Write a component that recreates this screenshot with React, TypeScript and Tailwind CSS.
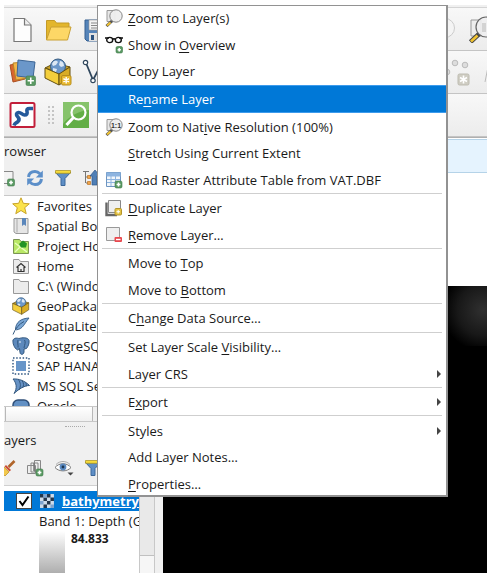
import React from "react";

type Glyph = () => React.ReactElement;

const PlusBadge = ({ x, y, s = 8 }: { x: number; y: number; s?: number }) => (
  <g>
    <rect x={x} y={y} width={s} height={s} rx="1.5" fill="#5a9a63" stroke="#3f7a49" strokeWidth=".6" />
    <path d={`M${x + s / 2} ${y + 1.6}v${s - 3.2}M${x + 1.6} ${y + s / 2}h${s - 3.2}`} stroke="#fff" strokeWidth="1.6" />
  </g>
);

const PageIcon: Glyph = () => (
  <svg width="28" height="28" viewBox="0 0 28 28">
    <path d="M6 3.500h10.500l6.500 6.500v16.500H6z" fill="#fdfdfd" stroke="#777" strokeWidth="1.200" />
    <path d="M16.500 3.500v6.500H23" fill="#eee" stroke="#777" strokeWidth="1.200" />
  </svg>
);
const OpenIcon: Glyph = () => (
  <svg width="28" height="28" viewBox="0 0 28 28">
    <path d="M2.500 25V5.500h8l2 2.500H25v6" fill="#e3b62d" stroke="#c49a27" />
    <path d="M2.500 25 7 12h20l-3.500 13z" fill="#fdd766" stroke="#c9a033" />
  </svg>
);
const SaveIcon: Glyph = () => (
  <svg width="28" height="28" viewBox="0 0 28 28">
    <path d="M5 5h21v21H7l-2-2z" fill="#5584b9" stroke="#345f91" />
    <path d="M9 5h14v10H9z" fill="#f3f3f3" stroke="#999" strokeWidth=".6" />
    <path d="M11 8h11M11 10.500h11M11 13h11" stroke="#888" />
    <path d="M9 18h13v8H9z" fill="#e2e2e2" />
    <path d="M11 20h3v5h-3z" fill="#2c5380" />
  </svg>
);
const LayersIcon: Glyph = () => (
  <svg width="28" height="28" viewBox="0 0 28 28">
    <path d="m2 7 12-2 3 16-12 3z" fill="#d9662f" stroke="#a94e20" />
    <path d="m5 5 13-1 2 16-12 2z" fill="#f0b64a" stroke="#b98427" />
    <path d="m10 2 17 2-2 16-16-2z" fill="#6b97c9" stroke="#3c6594" />
    <PlusBadge x={18} y={18} s={9.5} />
  </svg>
);
const CubeArt = () => (
  <g>
    <path d="m1 10 10-5 15 4-10 6z" fill="#c9a227" stroke="#645012" />
    <circle cx="14" cy="8.500" r="7.500" fill="#6b97c9" stroke="#34597f" />
    <path d="M9 4c2-2 4-1 5 0l-2 3-3 1-1-2zM16 3c3 0 4 3 4 5l-3 1-2-2zM9 10l4 1-1 3-3-1z" fill="#dce8f4" />
    <path d="m1 10 14 6v11L1 20z" fill="#f4cf3c" stroke="#645012" />
    <path d="m15 16 11-7v11l-11 7z" fill="#d9ac25" stroke="#645012" />
  </g>
);
const NewGeoPackageIcon: Glyph = () => (
  <svg width="28" height="28" viewBox="0 0 28 28">
    <CubeArt />
    <rect x="17.500" y="17.500" width="9.500" height="9.500" rx="1.500" fill="#e8b931" stroke="#b88d1b" />
    <path d="M22.200 19v6.500M19.400 20.600l5.600 3.300M25 20.600l-5.600 3.300" stroke="#fff" strokeWidth="1.400" />
  </svg>
);
const VertexIcon: Glyph = () => (
  <svg width="28" height="28" viewBox="0 0 28 28" fill="none">
    <path d="m6 5 7 17 9-17" stroke="#2f465c" strokeWidth="1.800" />
    <g fill="#fff" stroke="#2f465c" strokeWidth="1.200">
      <circle cx="5.500" cy="4.500" r="2.200" />
      <circle cx="13" cy="22.500" r="2.200" />
      <circle cx="22" cy="4.500" r="2.200" />
    </g>
  </svg>
);
const RiverIcon: Glyph = () => (
  <svg width="28" height="28" viewBox="0 0 28 28">
    <rect x="2.500" y="2" width="24" height="24" rx="1.500" fill="#fff" stroke="#c21f3a" strokeWidth="2" />
    <path
      d="M25 7.500h-3.500c-2.500 0-3 1-2.500 3s0 3.500-2.500 3.500S13 11 10.500 11.500s-2.500 2.500-1 4 2.500 3 .5 5-3 1-4 4"
      fill="none"
      stroke="#255a9b"
      strokeWidth="3.600"
    />
  </svg>
);
const GreenSearchIcon: Glyph = () => (
  <svg width="28" height="28" viewBox="0 0 28 28">
    <rect x="1" y="1" width="26" height="26" fill="#62ae46" />
    <path d="M1 1h26v8C18 10 8 14 1 23z" fill="#86c36b" />
    <circle cx="16.500" cy="11.500" r="7" fill="none" stroke="#fff" strokeWidth="2.200" />
    <path d="M11.500 16.500 4.500 24" stroke="#fff" strokeWidth="3" />
  </svg>
);
const FaintLensIcon: Glyph = () => (
  <svg width="28" height="28" viewBox="0 0 28 28" fill="none">
    <circle cx="14" cy="13" r="9.500" fill="#f4f4f4" stroke="#ccc" />
  </svg>
);
const ZoomLayerBigIcon: Glyph = () => (
  <svg width="28" height="28" viewBox="0 0 28 28">
    <path d="M4 5h10v16H4z" fill="#ededed" stroke="#999" />
    <path d="m12 19-8.500 8" stroke="#444" strokeWidth="4.600" />
    <path d="m10.500 20.500-6.500 6" stroke="#f2c431" strokeWidth="2.600" />
    <circle cx="19" cy="12" r="10" fill="#eeeef0" fillOpacity=".9" stroke="#666" strokeWidth="1.200" />
    <path d="M15 8h4v9h-4z" fill="#d3d3d3" />
  </svg>
);
const FaintPointsIcon: Glyph = () => (
  <svg width="28" height="28" viewBox="0 0 28 28">
    <g fill="#ddd" stroke="#bbb">
      <circle cx="12" cy="5" r="2.800" />
      <circle cx="22" cy="7" r="2.800" />
      <circle cx="4" cy="14" r="2.800" />
    </g>
    <rect x="15" y="16" width="11" height="11" rx="1.500" fill="#cfcdc3" stroke="#bdbbb0" />
    <path d="M20.500 17.500v8M17 19.500l7 4M24 19.500l-7 4" stroke="#fff" strokeWidth="1.600" />
  </svg>
);
const FaintLineIcon: Glyph = () => (
  <svg width="28" height="28" viewBox="0 0 28 28" fill="none" stroke="#bbb">
    <path d="m2 24 4-20M6 4l6 18" />
  </svg>
);

const AddLayerSmall: Glyph = () => (
  <svg width="18" height="18" viewBox="0 0 18 18">
    <path d="M1 2.500h14v12H1z" fill="#f3f3f3" stroke="#888" />
    <PlusBadge x={9.500} y={10} s={7} />
  </svg>
);
const RefreshIcon: Glyph = () => (
  <svg width="18" height="18" viewBox="0 0 18 18" fill="none">
    <path d="M2.500 8C3 4 6 2.500 9 2.500c2 0 3.500.800 5 2.300" stroke="#5c8fc9" strokeWidth="3" />
    <path d="M16.800 1.500v7h-7z" fill="#5c8fc9" />
    <path d="M15.500 10c-.500 4-3.500 5.500-6.500 5.500-2 0-3.500-.800-5-2.300" stroke="#5c8fc9" strokeWidth="3" />
    <path d="M1.200 16.500v-7h7z" fill="#5c8fc9" />
  </svg>
);
const FilterIcon: Glyph = () => (
  <svg width="18" height="18" viewBox="0 0 18 18">
    <path d="M1.500 3.500h15L11 9.500v7H7v-7z" fill="#5f8fc6" stroke="#3c689b" />
    <path d="M1.500 1.500h15v2.800h-15z" fill="#f6dc3c" stroke="#a68d1a" strokeWidth=".7" />
  </svg>
);
const CollapseIcon: Glyph = () => (
  <svg width="18" height="18" viewBox="0 0 18 18">
    <path d="M1 2.500h6M3.500 3v11M4 8h4M4 14h4" stroke="#777" fill="none" />
    <path d="M5.500 6.500h3v3h-3zM5.500 12.500h3v3h-3z" fill="#f0a54a" stroke="#bb7425" strokeWidth=".7" />
    <path d="m13 1 5 6h-3v9h-5V7H8z" fill="#4f7fb6" stroke="#2f5688" strokeWidth=".7" />
  </svg>
);
const BroomIcon: Glyph = () => (
  <svg width="18" height="18" viewBox="0 0 18 18">
    <path d="m16.500 2-6 6" stroke="#b0652b" strokeWidth="2.600" />
    <path d="m8 6 5 5-1.500 1.500-5-5z" fill="#cc4d34" />
    <path d="m6 8 5 5-4 4L1 11z" fill="#f2c84c" stroke="#bb8e20" strokeWidth=".7" />
  </svg>
);
const GroupAddIcon: Glyph = () => (
  <svg width="18" height="18" viewBox="0 0 18 18">
    <path d="M1.500 6.500h8v8h-8zM5 4h7v9H5zM8.500 1.500h6v11h-6z" fill="#eee" stroke="#888" />
    <path d="M8 4v8" stroke="#777" strokeWidth="1.500" />
    <PlusBadge x={10} y={10} s={7} />
  </svg>
);
const EyeIcon: Glyph = () => (
  <svg width="20" height="18" viewBox="0 0 20 18">
    <path d="M1 8.500C5 3.500 13 3.500 17 8.500c-4 4.500-12 4.500-16 0z" fill="#fff" stroke="#777" />
    <path d="M2 5.500c4-4 10-4 14 0" fill="none" stroke="#aaa" />
    <circle cx="9" cy="8" r="3.400" fill="#5b8ac0" />
    <circle cx="9" cy="8" r="1.400" fill="#1d3550" />
    <path d="M13.500 13.500h6l-3 3z" fill="#444" />
  </svg>
);

const StarIcon: Glyph = () => (
  <svg width="18" height="18" viewBox="0 0 18 18">
    <path d="m9 .8 2.300 5.500 6 .5-4.600 3.900 1.500 6L9 13.500l-5.200 3.200 1.500-6L.7 6.800l6-.5z" fill="#fbe34b" stroke="#c9a42a" />
  </svg>
);
const BookmarkIcon: Glyph = () => (
  <svg width="18" height="18" viewBox="0 0 18 18">
    <path d="M2 1.500h14v15H4l-2-1.500z" fill="#e6e6e6" stroke="#9a9a9a" />
    <path d="M5 1.500v14" stroke="#aaa" />
    <path d="M10 1h4v8l-2-1.500L10 9z" fill="#5a86bb" />
  </svg>
);
const ProjectHomeIcon: Glyph = () => (
  <svg width="18" height="18" viewBox="0 0 18 18">
    <path d="M1.500 2.500h6l1.500 2h7.500v12h-15z" fill="#b9e866" stroke="#7b9453" />
    <path d="m3 6 12 9M3 15l5-5" stroke="#e9ffc0" strokeWidth="1.300" />
    <path d="m7 7 4-3.500 4 3-1 4h-5z" fill="#229322" />
  </svg>
);
const FolderShape = () => <path d="M1.500 2.500h5.500l1.500 2h8v12h-15z" fill="#ececec" stroke="#999" />;
const HomeIcon: Glyph = () => (
  <svg width="18" height="18" viewBox="0 0 18 18">
    <FolderShape />
    <path d="m4.500 10.500 4.500-4 4.500 4M6 10v4.500h6V10M9 14.500V12" fill="none" stroke="#333" strokeWidth="1.200" />
  </svg>
);
const FolderIcon: Glyph = () => (
  <svg width="18" height="18" viewBox="0 0 18 18">
    <FolderShape />
  </svg>
);
const GeoPackageIcon: Glyph = () => (
  <svg width="18" height="18" viewBox="0 0 28 28">
    <CubeArt />
  </svg>
);
const FeatherIcon: Glyph = () => (
  <svg width="18" height="18" viewBox="0 0 18 18">
    <path d="M17 1C9 1.500 4 5 3.500 12l1 .8C11 12 12 7 17 1z" fill="#79a5d3" stroke="#3f6690" />
    <path d="M1 17.500C3 12 7 7 12 4.500" fill="none" stroke="#34597f" />
  </svg>
);
const ElephantIcon: Glyph = () => (
  <svg width="18" height="18" viewBox="0 0 18 18">
    <path d="M1 3c1.500-2.500 4-2 6-1.500 3-1 9-1.500 10 2 .5 3-1 6-2.500 8l-2.500.5v3c0 3-4 3-4 .5l-.5-4-2 1.500C2 11 .5 6 1 3z" fill="#5d89bc" stroke="#33587f" />
    <path d="M6 3c-1 3 .5 5 0 7.500M12.500 3c1.500 2.500 0 4.500-.5 8" fill="none" stroke="#33587f" />
    <circle cx="8" cy="5" r=".8" fill="#fff" />
  </svg>
);
const HanaIcon: Glyph = () => (
  <svg width="18" height="18" viewBox="0 0 18 18">
    <path d="M4 4h10v10H4z" fill="#6795c9" />
    <path d="M1 1h16v16H1z" fill="none" stroke="#2f5580" strokeWidth="1.400" strokeDasharray="1.500 1.700" />
  </svg>
);
const MssqlIcon: Glyph = () => (
  <svg width="18" height="18" viewBox="0 0 18 18">
    <path d="M1 2c6-.5 12 2 16.500 6.500-5 0-10 3-15.500 8C5.500 11 4.500 6 1 2z" fill="#6692c5" stroke="#33587f" />
    <path d="M6 2c3 4 3 7 1 11M10 3.500c2 3 2 5 .5 7.500M13.500 5.500c1 1.500 1 2.500.5 4" fill="none" stroke="#33587f" />
  </svg>
);
const OracleIcon: Glyph = () => (
  <svg width="18" height="18" viewBox="0 0 18 18">
    <rect x="1" y="3" width="16" height="12" rx="5" fill="#6290c4" stroke="#2f4f78" strokeWidth="1.500" />
  </svg>
);

const ZoomArt = ({ label }: { label?: string }) => (
  <svg width="18" height="18" viewBox="0 0 18 18">
    <path d="M2 1.500h8v11H2z" fill="#e8e8e8" stroke="#999" />
    <path d="m7.500 11.500-6 5.500" stroke="#555" strokeWidth="3" />
    <path d="M5.500 13.500 2 16.500" stroke="#f2c431" strokeWidth="1.900" />
    <circle cx="11" cy="7" r="6.200" fill="#eee" fillOpacity=".95" stroke="#888" />
    {label && (
      <text x="11" y="9.500" fontSize="7" fontWeight="700" textAnchor="middle" fill="#333" fontFamily="Liberation Sans, sans-serif">
        {label}
      </text>
    )}
  </svg>
);
const GlassesIcon: Glyph = () => (
  <svg width="18" height="18" viewBox="0 0 18 18" fill="none">
    <path d="M0 2h4M14 2h4M7.500 3.500c1-1 2-1 3 0" stroke="#111" strokeWidth="1.400" />
    <ellipse cx="4.700" cy="4" rx="3" ry="2.600" stroke="#111" strokeWidth="1.400" />
    <ellipse cx="13.300" cy="4" rx="3" ry="2.600" stroke="#111" strokeWidth="1.400" />
    <PlusBadge x={11} y={10.500} s={6.500} />
  </svg>
);
const TableIcon: Glyph = () => (
  <svg width="18" height="18" viewBox="0 0 18 18">
    <path d="M1.500 1.500h14v14h-14z" fill="#f1f6fb" stroke="#6d94c0" />
    <path d="M1.500 1.500h14v4h-14z" fill="#8db4e0" />
    <path d="M2 8.500h13M2 11.500h13M6 5v10M10.500 5v10" stroke="#8db4e0" />
    <PlusBadge x={10} y={10} s={7} />
  </svg>
);
const DuplicateIcon: Glyph = () => (
  <svg width="18" height="18" viewBox="0 0 18 18">
    <path d="M1.500 3.500v12.500H12" fill="none" stroke="#666" strokeWidth="2.400" />
    <path d="M3.500 1.500h12v12h-12z" fill="#efefef" stroke="#888" />
    <rect x="10" y="9.500" width="6.500" height="6.500" rx="1" fill="#e4c445" stroke="#b5952a" />
    <path d="M13.200 11v3.500M11.500 12.700H15" stroke="#fff" />
  </svg>
);
const RemoveIcon: Glyph = () => (
  <svg width="18" height="18" viewBox="0 0 18 18">
    <path d="M1.500 1.500h13v13h-13z" fill="#efefef" stroke="#999" />
    <rect x="9.500" y="11" width="7.500" height="5" rx="1" fill="#e8484e" />
    <path d="M11 13.500h4.500" stroke="#fff" strokeWidth="1.400" />
  </svg>
);
const RasterIcon: Glyph = () => (
  <svg width="16" height="16" viewBox="0 0 16 16">
    <path d="M0 0h16v16H0z" fill="#cfdcea" />
    <path d="M0 0h4v4H0zM8 0h4v4H8zM4 4h4v4H4zM12 4h4v4h-4zM8 8h4v4H8zM4 12h4v4H4z" fill="#24364b" />
    <path d="M4 0h4v4H4zM0 8h4v4H0zM12 12h4v4h-4z" fill="#7da3cf" />
  </svg>
);

const ToolButton = ({ icon: Icon, label }: { icon: Glyph; label: string }) => (
  <button type="button" aria-label={label} className="flex shrink-0 items-center justify-center">
    <Icon />
  </button>
);

interface MenuEntry {
  text: string;
  /** Index of the mnemonic letter, which is underlined. */
  mnemonic?: number;
  icon?: Glyph;
  active?: boolean;
  submenu?: boolean;
}

const menuGroups: MenuEntry[][] = [
  [
    { text: "Zoom to Layer(s)", mnemonic: 0, icon: () => <ZoomArt /> },
    { text: "Show in Overview", mnemonic: 8, icon: GlassesIcon },
    { text: "Copy Layer" },
    { text: "Rename Layer", mnemonic: 2, active: true },
    { text: "Zoom to Native Resolution (100%)", mnemonic: 11, icon: () => <ZoomArt label="1:1" /> },
    { text: "Stretch Using Current Extent", mnemonic: 0 },
    { text: "Load Raster Attribute Table from VAT.DBF", icon: TableIcon },
  ],
  [
    { text: "Duplicate Layer", mnemonic: 0, icon: DuplicateIcon },
    { text: "Remove Layer…", mnemonic: 0, icon: RemoveIcon },
  ],
  [
    { text: "Move to Top", mnemonic: 8 },
    { text: "Move to Bottom", mnemonic: 8 },
  ],
  [{ text: "Change Data Source…", mnemonic: 1 }],
  [
    { text: "Set Layer Scale Visibility…", mnemonic: 16 },
    { text: "Layer CRS", submenu: true },
  ],
  [{ text: "Export", mnemonic: 1, submenu: true }],
  [
    { text: "Styles", submenu: true },
    { text: "Add Layer Notes…" },
    { text: "Properties…", mnemonic: 0 },
  ],
];

const MenuRow = ({ text, mnemonic, icon: Icon, active, submenu }: MenuEntry) => (
  <button
    type="button"
    role="menuitem"
    className={`flex min-h-0 flex-1 items-center pr-1 pl-[7px] text-left whitespace-nowrap ${
      active ? "border-y border-[#3d9bec] bg-[#0078d7] text-white" : "text-[#1a1a1a]"
    }`}
  >
    <span className="flex w-[23px] shrink-0">{Icon && <Icon />}</span>
    <span className="flex-1">
      {mnemonic === undefined ? (
        text
      ) : (
        <>
          {text.slice(0, mnemonic)}
          <span className="underline underline-offset-2">{text[mnemonic]}</span>
          {text.slice(mnemonic + 1)}
        </>
      )}
    </span>
    {submenu && (
      <svg width="6" height="8" viewBox="0 0 6 8">
        <path d="M1 0v8l4-4z" fill="#444" />
      </svg>
    )}
  </button>
);

const browserItems: [string, Glyph][] = [
  ["Favorites", StarIcon],
  ["Spatial Bookmarks", BookmarkIcon],
  ["Project Home", ProjectHomeIcon],
  ["Home", HomeIcon],
  ["C:\\ (Windows)", FolderIcon],
  ["GeoPackage", GeoPackageIcon],
  ["SpatiaLite", FeatherIcon],
  ["PostgreSQL", ElephantIcon],
  ["SAP HANA", HanaIcon],
  ["MS SQL Server", MssqlIcon],
  ["Oracle", OracleIcon],
];

const bar = "flex items-center border-b border-[#c4c4c4] bg-linear-to-b from-[#f8f8f8] to-[#ececec] pl-1";

export default function App() {
  return (
    <div className="relative flex h-screen flex-col overflow-hidden bg-white pt-[5px] pl-1 font-['Open_Sans','Noto_Sans',sans-serif] text-[13px] leading-5 text-[#1a1a1a]">
      <header className="shrink-0 border-b border-[#b0b0b0] bg-[#f0f0f0]">
        <div className="h-[3px] border-b border-[#d4d4d4]" />
        <div className={`${bar} h-[43px] gap-2`}>
          <ToolButton icon={PageIcon} label="New Project" />
          <ToolButton icon={OpenIcon} label="Open Project" />
          <ToolButton icon={SaveIcon} label="Save Project" />
          <div className="-mr-2 ml-auto flex gap-2">
            <ToolButton icon={FaintLensIcon} label="Zoom Last" />
            <ToolButton icon={ZoomLayerBigIcon} label="Zoom to Layer" />
          </div>
        </div>
        <div className={`${bar} h-[43px] gap-2`}>
          <ToolButton icon={LayersIcon} label="Data Source Manager" />
          <ToolButton icon={NewGeoPackageIcon} label="New GeoPackage Layer" />
          <ToolButton icon={VertexIcon} label="New Shapefile Layer" />
          <div className="-mr-6 ml-auto flex gap-3">
            <ToolButton icon={FaintPointsIcon} label="Add Point Feature" />
            <ToolButton icon={FaintLineIcon} label="Vertex Tool" />
          </div>
        </div>
        <div className={`${bar} h-[43px]`}>
          <ToolButton icon={RiverIcon} label="River Tools" />
          <span className="mr-2 ml-3 h-[18px] w-[6px] border-x-2 border-dotted border-[#c4c4c4]" />
          <ToolButton icon={GreenSearchIcon} label="Search" />
        </div>
      </header>

      <div className="flex min-h-0 flex-1">
        <aside className="flex w-[159px] shrink-0 flex-col overflow-hidden bg-[#f0f0f0]">
          <h2 className="py-[3px]">rowser</h2>
          <div className="flex h-8 items-center gap-[10px] border-b border-[#c8c8c8] pb-1">
            <span className="-ml-[6px] flex">
              <ToolButton icon={AddLayerSmall} label="Add Selected Layers" />
            </span>
            <ToolButton icon={RefreshIcon} label="Refresh" />
            <ToolButton icon={FilterIcon} label="Filter Browser" />
            <ToolButton icon={CollapseIcon} label="Collapse All" />
          </div>
          <ul className="h-[210px] shrink-0 overflow-hidden bg-white">
            {browserItems.map(([name, Icon]) => (
              <li key={name} className="flex h-5 items-center gap-[7px] pl-2 whitespace-nowrap">
                <Icon />
                {name}
              </li>
            ))}
          </ul>
          <div className="flex h-4 shrink-0 border-y border-[#c8c8c8] pl-px">
            <div className="w-[88px] border-x border-[#b8b8b8] bg-linear-to-b from-white to-[#f0f0f0]" />
          </div>
          <div className="flex h-2 shrink-0 items-center pl-[61px]">
            <span className="w-5 border-t border-dotted border-[#aaa]" />
          </div>
          <h2 className="shrink-0">ayers</h2>
          <div className="flex h-9 shrink-0 items-center gap-[10px] border-b border-[#d0d0d0]">
            <span className="-ml-[6px] flex">
              <ToolButton icon={BroomIcon} label="Open Layer Styling" />
            </span>
            <ToolButton icon={GroupAddIcon} label="Add Group" />
            <ToolButton icon={EyeIcon} label="Manage Map Themes" />
            <ToolButton icon={FilterIcon} label="Filter Legend" />
          </div>
          <div className="flex min-h-0 flex-1">
            <div className="w-[135px] overflow-hidden bg-white pt-[5px]">
              <div className="flex h-5 items-center bg-[#0078d7] pl-3">
                <label className="mr-2 grid size-4 shrink-0 place-items-center bg-white">
                  <input
                    type="checkbox"
                    defaultChecked
                    aria-label="Show bathymetry"
                    className="peer col-start-1 row-start-1 size-4 appearance-none border border-[#444] bg-white"
                  />
                  <svg width="12" height="12" viewBox="0 0 12 12" className="pointer-events-none invisible col-start-1 row-start-1 peer-checked:visible">
                    <path d="m1.500 6 3 4L10.500 1.500" fill="none" stroke="#000" strokeWidth="2" />
                  </svg>
                </label>
                <RasterIcon />
                <span className="ml-2 font-bold text-white underline">bathymetry</span>
              </div>
              <div className="pl-[35px] whitespace-nowrap">Band 1: Depth (Gray)</div>
              <div className="flex gap-[6px] pl-[35px]">
                <div className="h-[50px] w-[26px] bg-linear-to-b from-white to-[#a0a0a0]" />
                <span className="font-['Noto_Sans',sans-serif] text-[12px] leading-4 font-bold">84.833</span>
              </div>
            </div>
            <div className="w-4 border-x border-[#c8c8c8] bg-[#f6f6f6]">
              <div className="h-[70px] border-y border-[#c0c0c0] bg-[#e9e9e9]" />
            </div>
          </div>
        </aside>

        <main className="flex flex-1 flex-col bg-white">
          <div className="mt-px h-[34px] shrink-0 border-y border-[#b5d3e8] bg-[#e5f3fe]" />
          <div className="mt-[113px] flex flex-1 justify-end bg-black">
            <div className="h-[60px] w-10 bg-radial-[at_90%_40%] from-[#303030] via-[#181818] to-black to-80%" />
          </div>
        </main>
      </div>

      <div
        role="menu"
        className="absolute top-[5px] left-[97px] flex h-[492px] w-[351px] flex-col border border-r-2 border-b-2 border-[#929292] bg-white"
      >
        <div className="-mt-px -mb-0.5 flex min-h-0 flex-1 flex-col">
          {menuGroups.map((group, i) => (
            <React.Fragment key={i}>
              {i > 0 && <hr className="mx-1 mb-px h-px shrink-0 border-0 bg-[#cfcfcf]" />}
              {group.map((entry) => (
                <MenuRow key={entry.text} {...entry} />
              ))}
            </React.Fragment>
          ))}
        </div>
      </div>
    </div>
  );
}
